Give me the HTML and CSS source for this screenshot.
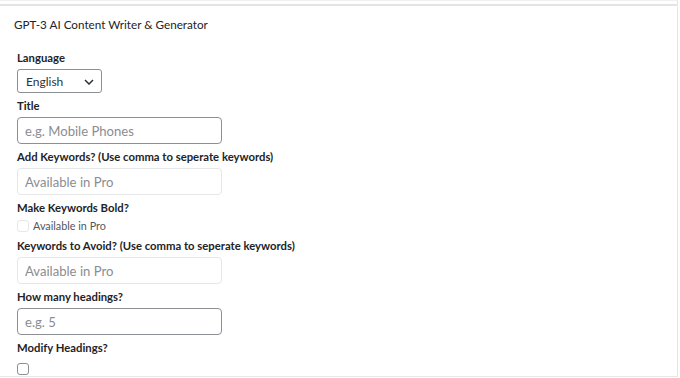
FILE: index.html
```html
<!DOCTYPE html>
<html>
<head>
<meta charset="utf-8">
<link rel="stylesheet" href="styles.css">
</head>
<body>
<div class="page">
  <div class="topstrip"></div>
  <div class="panel">
    <h2 class="panel-title">GPT-3 AI Content Writer &amp; Generator</h2>
    <div class="form">
      <div class="field">
        <label class="label">Language</label>
        <div class="select">
          <span>English</span>
          <svg class="chev" width="10" height="6" viewBox="0 0 10 6"><path d="M1 1l4 4 4-4" fill="none" stroke="#2c3338" stroke-width="1.5"/></svg>
        </div>
      </div>
      <div class="field">
        <label class="label">Title</label>
        <input class="input" type="text" placeholder="e.g. Mobile Phones">
      </div>
      <div class="field">
        <label class="label">Add Keywords? (Use comma to seperate keywords)</label>
        <input class="input disabled" type="text" placeholder="Available in Pro" disabled>
      </div>
      <div class="field">
        <label class="label">Make Keywords Bold?</label>
        <div class="check-row">
          <span class="checkbox light"></span>
          <span class="check-text">Available in Pro</span>
        </div>
      </div>
      <div class="field">
        <label class="label">Keywords to Avoid? (Use comma to seperate keywords)</label>
        <input class="input disabled" type="text" placeholder="Available in Pro" disabled>
      </div>
      <div class="field">
        <label class="label">How many headings?</label>
        <input class="input" type="text" placeholder="e.g. 5">
      </div>
      <div class="field">
        <label class="label">Modify Headings?</label>
        <div class="check-row">
          <span class="checkbox"></span>
        </div>
      </div>
    </div>
  </div>
</div>
</body>
</html>
```
FILE: styles.css
```css
* { box-sizing: border-box; }
html, body { margin: 0; padding: 0; background: #fff; }
body {
  font-family: "Lato", "Open Sans", sans-serif;
  color: #1d2327;
  width: 680px;
  height: 378px;
  overflow: hidden;
}
.page { width: 678px; }
.topstrip {
  height: 6px;
  border-top: 1px solid #f0f0f0;
  border-bottom: 2px solid #e4e4e4;
  border-right: 1px solid #e4e4e4;
  background: #fff;
}
.panel {
  margin-top: 1px;
  height: 370px;
  border-right: 1px solid #e4e4e4;
  border-bottom: 1px solid #e8e8e8;
  padding: 9px 0 0 14px;
}
.panel-title {
  margin: 0;
  font-size: 11.7px;
  font-weight: 400;
  line-height: 16px;
  color: #1d2327;
}
.form {
  margin-top: 18px;
  padding-left: 3px;
  display: flex;
  flex-direction: column;
  gap: 5px;
}
.field { display: flex; flex-direction: column; align-items: flex-start; }
.label {
  font-size: 11.3px;
  font-weight: 700;
  line-height: 16px;
  margin-bottom: 3px;
  color: #1d2327;
}
.select {
  width: 85px;
  height: 24px;
  border: 1px solid #8c8f94;
  border-radius: 3px;
  display: flex;
  align-items: center;
  justify-content: space-between;
  padding: 0 7px 0 8px;
  font-size: 12px;
  color: #2c3338;
}
.chev { margin-top: 1px; }
.input {
  width: 205px;
  height: 27px;
  border: 1px solid #8c8f94;
  border-radius: 4px;
  padding: 0 7px;
  font-family: inherit;
  font-size: 13.1px;
  color: #2c3338;
  background: #fff;
  margin: 0;
}
.input::placeholder { color: #8a8d91; opacity: 1; }
.input.disabled {
  border-color: #e6e7e8;
  background: #fff;
}
.input.disabled::placeholder { color: #8a8d91; }
.check-row {
  display: flex;
  align-items: center;
  gap: 4px;
  height: 14px;
}
.checkbox {
  width: 12px;
  height: 12px;
  border: 1px solid #8c8f94;
  border-radius: 3px;
  background: #fff;
  display: inline-block;
}
.checkbox.light { border-color: #e6e7e8; }
.check-text { font-size: 10.8px; color: #50575e; line-height: 14px; }
.field:last-child .check-row { margin-top: 3px; }
```
